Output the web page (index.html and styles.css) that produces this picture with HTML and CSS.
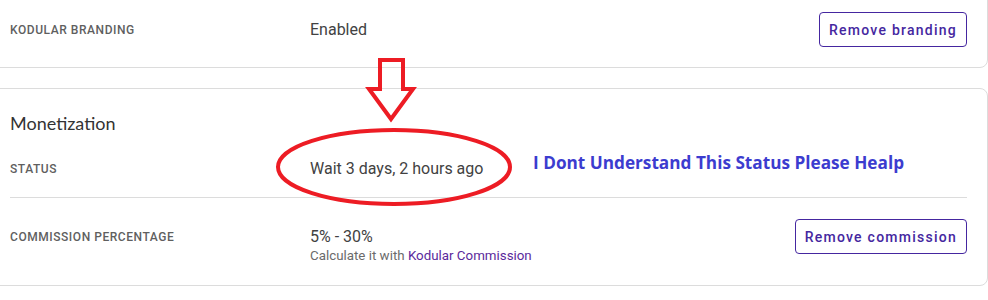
FILE: index.html
```html
<!DOCTYPE html>
<html>
<head>
<meta charset="utf-8">
<link rel="stylesheet" href="styles.css">
</head>
<body>
<div class="page">
  <section class="card card-top">
    <div class="row">
      <div class="label">Kodular branding</div>
      <div class="value">Enabled</div>
      <button class="btn">Remove branding</button>
    </div>
  </section>

  <section class="card card-money">
    <h2 class="title">Monetization</h2>
    <div class="row row-status divided">
      <div class="label">Status</div>
      <div class="value">Wait 3 days, 2 hours ago</div>
    </div>
    <div class="row row-commission">
      <div class="label">Commission percentage</div>
      <div class="value value-stack">
        <div class="main">5% - 30%</div>
        <div class="sub">Calculate it with <a class="link" href="#">Kodular Commission</a></div>
      </div>
      <button class="btn">Remove commission</button>
    </div>
  </section>
</div>

<svg class="marks" width="988" height="300" viewBox="0 0 988 300" xmlns="http://www.w3.org/2000/svg">
  <polygon points="380,60 403,60 403,89 413,89 391,119 369,89 380,89" fill="none" stroke="#ed1c24" stroke-width="4" stroke-linejoin="miter"/>
  <ellipse cx="394" cy="167" rx="116" ry="37" fill="none" stroke="#ed1c24" stroke-width="4"/>
</svg>
<div class="note">I Dont Understand This Status Please Healp</div>
</body>
</html>
```

FILE: styles.css
```css
html, body {
  margin: 0;
  padding: 0;
  background: #ffffff;
}
body {
  width: 988px;
  height: 300px;
  overflow: hidden;
  position: relative;
  font-family: Roboto, "Liberation Sans", sans-serif;
}
.page {
  margin-left: -11px;
}
.card {
  background: #fff;
  border: 1px solid #dcdcdc;
  border-radius: 8px;
  padding: 0 20px;
}
.card-top {
  margin-top: -9px;
}
.card-money {
  margin-top: 20px;
  padding-top: 20px;
}
.title {
  margin: 0;
  font-family: Lato, "Open Sans", sans-serif;
  font-weight: 400;
  font-size: 18px;
  line-height: 28px;
  color: #333;
}
.row {
  display: flex;
  align-items: center;
  padding: 20px 0 20px;
}
.divided {
  border-bottom: 1px solid #dcdcdc;
}
.row-status {
  padding: 20px 0 16px;
  line-height: 24px;
}
.row-commission {
  align-items: flex-start;
  padding: 21px 0 20px;
}
.label {
  width: 300px;
  flex: none;
  font-size: 12px;
  font-weight: 500;
  letter-spacing: 0.55px;
  text-transform: uppercase;
  color: #5f5f5f;
}
.row-commission .label {
  line-height: 37px;
}
.value {
  flex: 1;
  font-size: 16px;
  color: #424242;
}
.value-stack {
  padding-top: 8px;
}
.main {
  line-height: 20px;
}
.sub {
  font-size: 13.33px;
  line-height: 18px;
  color: #6b6b6b;
}
.link {
  color: #5b2a9c;
  text-decoration: none;
}
.btn {
  flex: none;
  height: 35px;
  padding: 0 9px;
  background: #fff;
  border: 1px solid #4527a0;
  border-radius: 4px;
  color: #4527a0;
  font-family: Roboto, "Liberation Sans", sans-serif;
  font-size: 14px;
  font-weight: 500;
  letter-spacing: 1.25px;
}
.marks {
  position: absolute;
  left: 0;
  top: 0;
}
.note {
  position: absolute;
  left: 533px;
  top: 150px;
  font-family: "Open Sans", sans-serif;
  font-weight: 700;
  font-size: 17.2px;
  line-height: 26px;
  color: #3c3ccf;
  white-space: nowrap;
}
```
